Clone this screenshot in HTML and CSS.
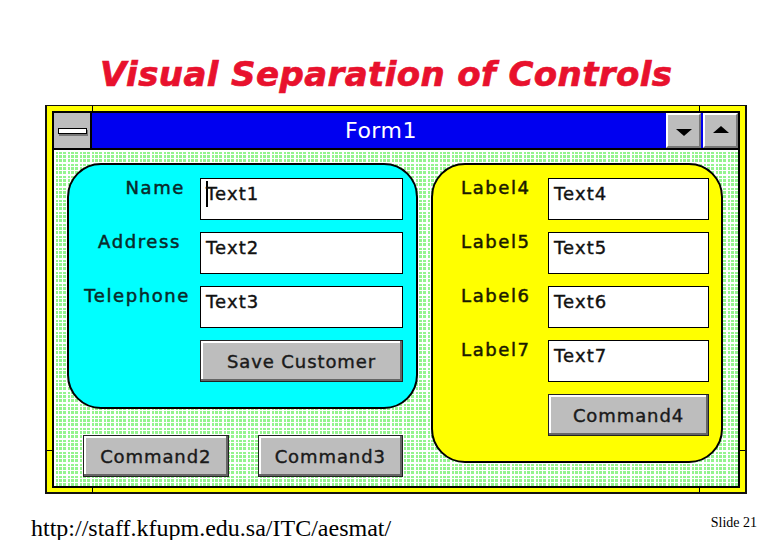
FILE: index.html
```html
<!DOCTYPE html>
<html lang="en">
<head>
    <meta charset="UTF-8">
    <title>Visual Separation of Controls</title>
    <link rel="stylesheet" href="styles.css">
</head>
<body>
    <div class="slide">
        <h1 class="title">Visual Separation of Controls</h1>
        <div class="window">
            <div class="titlebar">
                <div class="sysmenu"><span class="sysdash"></span></div>
                <div class="caption">Form1</div>
                <div class="winbtn"><span class="arrow-down"></span></div>
                <div class="winbtn"><span class="arrow-up"></span></div>
            </div>
            <div class="client">
                <div class="left">
                    <div class="panel cyan">
                        <div class="row"><label class="lbl name">Name</label><div class="text"><span class="caret"></span>Text1</div></div>
                        <div class="row"><label class="lbl address">Address</label><div class="text">Text2</div></div>
                        <div class="row"><label class="lbl">Telephone</label><div class="text">Text3</div></div>
                        <div class="row"><span class="lbl"></span><div class="btn">Save Customer</div></div>
                    </div>
                    <div class="cmds">
                        <div class="btn">Command2</div>
                        <div class="btn">Command3</div>
                    </div>
                </div>
                <div class="panel yellow">
                    <div class="row"><label class="lbl">Label4</label><div class="text">Text4</div></div>
                    <div class="row"><label class="lbl">Label5</label><div class="text">Text5</div></div>
                    <div class="row"><label class="lbl">Label6</label><div class="text">Text6</div></div>
                    <div class="row"><label class="lbl">Label7</label><div class="text">Text7</div></div>
                    <div class="row"><span class="lbl"></span><div class="btn">Command4</div></div>
                </div>
            </div>
            <!-- resize ticks on the frame -->
            <i class="tick top-l"></i>
            <i class="tick top-r"></i>
            <i class="tick bot-l"></i>
            <i class="tick bot-r"></i>
            <i class="tick side-l"></i>
            <i class="tick side-r"></i>
        </div>
        <div class="footer">
            <span class="url">http://staff.kfupm.edu.sa/ITC/aesmat/</span>
            <span class="num">Slide 21</span>
        </div>
    </div>
</body>
</html>
```

FILE: styles.css
```css
* {
    box-sizing: border-box;
}
html, body {
    margin: 0;
    padding: 0;
    background: #fff;
}
.slide {
    width: 780px;
    height: 540px;
    overflow: hidden;
    padding-top: 52px;
}
.title {
    margin: 0 0 0 100px;
    height: 53px;
    font: italic bold 34px/44px "DejaVu Sans", sans-serif;
    letter-spacing: 0.4px;
    color: #e8112d;
    -webkit-text-stroke: 0.7px #e8112d;
    white-space: nowrap;
}
.window {
    position: relative;
    width: 702px;
    height: 389px;
    margin-left: 45px;
    background: #ff0;
    border: 2px solid #111;
    border-top-width: 1px;
    padding: 5px;
}
.titlebar {
    display: flex;
    height: 38px;
    border: 2px solid #000;
    border-bottom-width: 1px;
    background: #0000f0;
}
.sysmenu {
    width: 38px;
    background: #bdbdbd;
    border-right: 2px solid #000;
    display: flex;
    align-items: center;
    justify-content: center;
}
.sysdash {
    width: 29px;
    height: 6px;
    background: #fff;
    border: 1px solid #000;
    box-shadow: 1px 2px 0 #777;
}
.caption {
    flex: 1;
    text-align: center;
    color: #fff;
    font: 22px/36px "DejaVu Sans", sans-serif;
    letter-spacing: 0.5px;
    padding-left: 6px;
}
.winbtn {
    width: 35px;
    margin-left: 2px;
    background: #bdbdbd;
    border: 2px solid;
    border-color: #fff #777 #777 #fff;
    display: flex;
    align-items: center;
    justify-content: center;
}
.arrow-down {
    border-left: 8px solid transparent;
    border-right: 8px solid transparent;
    border-top: 7px solid #000;
    margin-top: 3px;
}
.arrow-up {
    border-left: 8px solid transparent;
    border-right: 8px solid transparent;
    border-bottom: 7px solid #000;
    margin-bottom: 3px;
}
.client {
    display: flex;
    align-items: flex-start;
    gap: 13px;
    height: 339px;
    padding: 13px 0 0 13px;
    border: 2px solid #000;
    border-top: 1px solid #000;
    background-color: #94f48e;
    background-image:
        linear-gradient(90deg, #fff 1px, transparent 1px),
        linear-gradient(#fff 1px, transparent 1px),
        linear-gradient(90deg, #fff 2px, transparent 2px),
        linear-gradient(#fff 2px, transparent 2px);
    background-size: 4px 4px, 4px 4px, 12px 12px, 12px 12px;
}
.left {
    width: 351px;
}
.panel {
    border: 2px solid #000;
    border-radius: 34px;
}
.cyan {
    height: 246px;
    background: #0ff;
    padding: 13px 13px 0 0;
}
.yellow {
    width: 292px;
    height: 300px;
    background: #ff0;
    padding: 13px 12px 0 0;
}
.row {
    display: flex;
    margin-bottom: 12px;
}
.lbl {
    width: 121px;
    margin-right: 10px;
    text-align: right;
    font: 18px/20px "DejaVu Sans", sans-serif;
    letter-spacing: 1.6px;
    color: #0a2a2a;
    -webkit-text-stroke: 0.5px #0a2a2a;
    white-space: nowrap;
}
.lbl.name {
    padding-right: 5px;
}
.lbl.address {
    padding-right: 9px;
}
.yellow .lbl {
    width: 115px;
    margin-right: 0;
    padding-left: 28px;
    text-align: left;
    color: #1a1a00;
    -webkit-text-stroke: 0.5px #1a1a00;
}
.text {
    flex: 1;
    height: 42px;
    background: #fff;
    border: 1px solid #000;
    padding-left: 5px;
    color: #111;
    font: 18px/30px "DejaVu Sans", sans-serif;
    letter-spacing: 1.1px;
    -webkit-text-stroke: 0.4px #111;
}
.caret {
    display: inline-block;
    width: 2px;
    height: 26px;
    margin-right: -2px;
    background: #000;
    vertical-align: -7px;
}
.btn {
    flex: 1;
    height: 42px;
    background: #bdbdbd;
    border: 1px solid #222;
    box-shadow: inset -2px -2px 0 #666, inset 2px 2px 0 #fff;
    text-align: center;
    color: #1a1a1a;
    font: 18px/42px "DejaVu Sans", sans-serif;
    letter-spacing: 0.9px;
    -webkit-text-stroke: 0.4px #1a1a1a;
    white-space: nowrap;
}
.cmds {
    display: flex;
    gap: 29px;
    margin: 26px 0 0 16px;
    width: 320px;
}
.tick {
    position: absolute;
    background: #000;
}
.top-l, .bot-l, .top-r, .bot-r {
    width: 1px;
    height: 6px;
}
.top-l, .top-r {
    top: 0;
}
.bot-l, .bot-r {
    bottom: 0;
}
.top-l, .bot-l {
    left: 45px;
}
.top-r, .bot-r {
    left: 652px;
}
.side-l, .side-r {
    top: 344px;
    width: 6px;
    height: 1px;
}
.side-l {
    left: 0;
}
.side-r {
    right: 0;
}
.footer {
    display: flex;
    justify-content: space-between;
    height: 46px;
    padding: 20px 23px 0 31px;
    font-family: "Liberation Serif", "Times New Roman", serif;
    color: #000;
}
.url {
    font-size: 24px;
    line-height: 28px;
}
.num {
    font-size: 14px;
    line-height: 18px;
}
```
